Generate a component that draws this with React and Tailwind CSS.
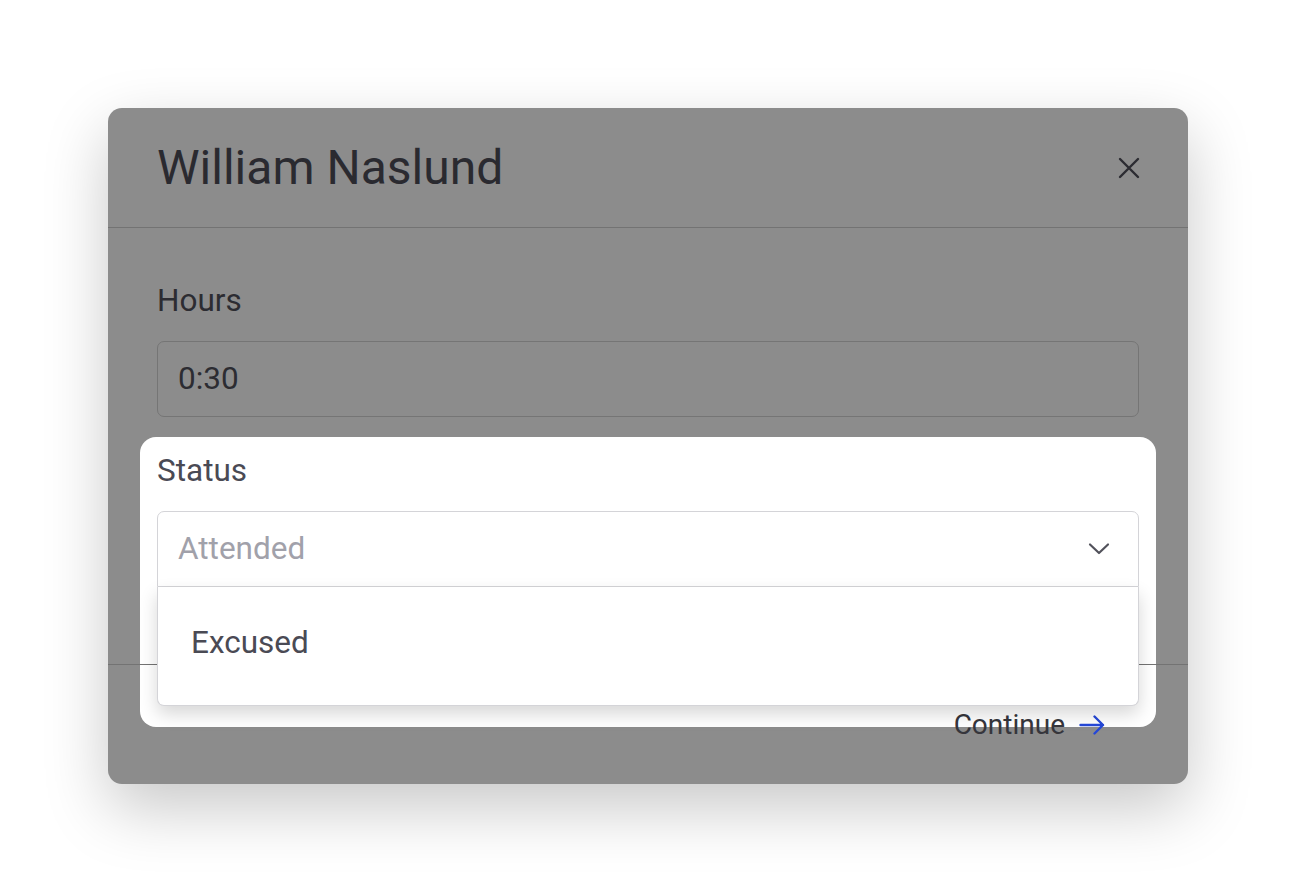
import React from 'react';

function CloseIcon() {
    return (
        <svg className="w-[22px] h-[22px]" viewBox="0 0 22 22" fill="none">
            <path d="M2 2L20 20M20 2L2 20" stroke="#2c2c32" strokeWidth="2.4" strokeLinecap="round" />
        </svg>
    );
}

function ChevronDown() {
    return (
        <svg className="w-[22px] h-[14px]" viewBox="0 0 22 14" fill="none">
            <path d="M2 2.5L11 11L20 2.5" stroke="#52525b" strokeWidth="2.2" strokeLinecap="round" strokeLinejoin="round" />
        </svg>
    );
}

function ArrowRight() {
    return (
        <svg className="w-[26px] h-[20px]" viewBox="0 0 26 20" fill="none">
            <path d="M1.5 10H24M15.5 1.5L24 10L15.5 18.5" stroke="#2548d8" strokeWidth="2.4" strokeLinecap="round" strokeLinejoin="round" />
        </svg>
    );
}

export default function App() {
    return (
        <div
            className="h-screen w-full bg-white flex items-center justify-center"
            style={{ fontFamily: 'Roboto, "Liberation Sans", sans-serif' }}
        >
            <div className="relative isolate w-[1080px] bg-[#8c8c8c] rounded-[14px] shadow-[0_24px_64px_rgba(0,0,0,0.22)]">
                {/* header */}
                <div className="h-[120px] px-[49px] flex items-center justify-between border-b border-[#737373]">
                    <h1 className="text-[48px] leading-[56px] text-[#2a2a30]">William Naslund</h1>
                    <button className="p-0 -mr-[1px]">
                        <CloseIcon />
                    </button>
                </div>

                {/* body */}
                <div className="px-[49px] pt-[54px] pb-[77px]">
                    <label className="block text-[31.5px] leading-[37px] text-[#2c2c32]">Hours</label>
                    <div className="mt-[22px] h-[76px] border border-[#757575] rounded-[7px] px-5 flex items-center text-[31.5px] text-[#2c2c32]">
                        0:30
                    </div>

                    <div className="relative mt-[35px]">
                        {/* spotlight */}
                        <div className="absolute z-0 -top-[15px] -left-[17px] -right-[17px] -bottom-[140px] bg-white rounded-[16px]" />

                        <label className="relative z-10 block text-[31.5px] leading-[37px] text-[#4a4a54]">Status</label>
                        <div className="relative z-10 mt-[22px] h-[76px] bg-white border border-[#d4d4d8] rounded-t-[7px] pl-5 pr-[28px] flex items-center justify-between">
                            <span className="text-[31.5px] text-[#a1a1aa]">Attended</span>
                            <ChevronDown />
                        </div>

                        {/* dropdown */}
                        <div className="absolute z-30 left-0 right-0 top-full h-[119px] bg-white border border-t-0 border-[#d4d4d8] rounded-b-[7px] shadow-[0_8px_18px_rgba(0,0,0,0.16)] pl-[33px] pt-[37px]">
                            <span className="block text-[31.5px] leading-[37px] text-[#4a4a54]">Excused</span>
                        </div>
                    </div>
                </div>

                {/* footer */}
                <div className="relative z-10 h-[120px] border-t border-[#737373] flex items-center justify-end pr-[83px]">
                    <button className="flex items-center gap-[14px] text-[28px] text-[#36363c]">
                        <span>Continue</span>
                        <ArrowRight />
                    </button>
                </div>
            </div>
        </div>
    );
}
